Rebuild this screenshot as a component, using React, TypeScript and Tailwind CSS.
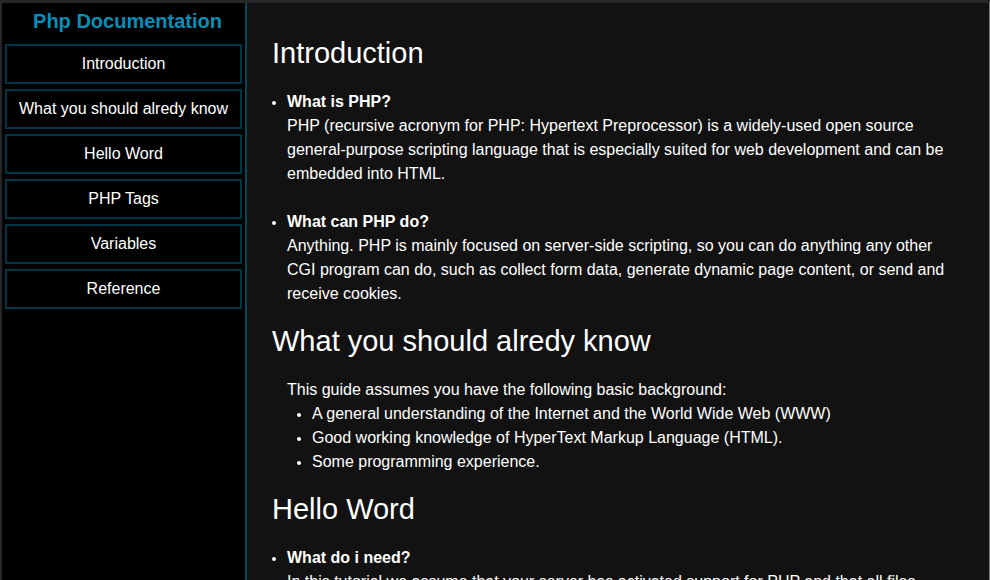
import React from "react";

const links = [
  { id: "introduction", title: "Introduction" },
  { id: "already-know", title: "What you should alredy know" },
  { id: "hello-word", title: "Hello Word" },
  { id: "php-tags", title: "PHP Tags" },
  { id: "variables", title: "Variables" },
  { id: "reference", title: "Reference" },
];

function Section({ id, title, children }: { id: string; title: string; children: React.ReactNode }) {
  return (
    <section id={id} className="pt-[11px]">
      <h2 className="mb-[13px] text-[29px] leading-[48px]">{title}</h2>
      {children}
    </section>
  );
}

function Topic({ title, children }: { title: string; children: React.ReactNode }) {
  return (
    <li>
      <h3 className="font-bold">{title}</h3>
      <p>{children}</p>
    </li>
  );
}

export default function App() {
  return (
    <div className="flex h-screen overflow-hidden border-t-[3px] border-r border-l-2 border-t-[#25262a] border-r-[#77797b] border-l-[#25262a] bg-[#121212] font-['Liberation_Sans',Arial,sans-serif] text-base leading-6 text-white">
      <nav className="w-[245px] shrink-0 border-r-2 border-[#00485c] bg-black px-[3px] text-center">
        <h1 className="pt-1 pb-2 pl-2 text-xl leading-[29px] font-bold text-[#088fb8]">Php Documentation</h1>
        <ul className="flex flex-col gap-[5px]">
          {links.map((link) => (
            <li key={link.id}>
              <a href={`#${link.id}`} className="block border-2 border-[#003646] py-[7px] leading-[22px]">
                {link.title}
              </a>
            </li>
          ))}
        </ul>
      </nav>
      <main className="min-w-0 flex-1 overflow-hidden pt-[15px] pr-10 pl-[25px]">
        <Section id="introduction" title="Introduction">
          <ul className="flex list-disc flex-col gap-6 pl-[15px] marker:text-sm">
            <Topic title="What is PHP?">
              PHP (recursive acronym for PHP: Hypertext Preprocessor) is a widely-used open source general-purpose
              scripting language that is especially suited for web development and can be embedded into HTML.
            </Topic>
            <Topic title="What can PHP do?">
              Anything. PHP is mainly focused on server-side scripting, so you can do anything any other CGI program can
              do, such as collect form data, generate dynamic page content, or send and receive cookies.
            </Topic>
          </ul>
        </Section>
        <Section id="already-know" title="What you should alredy know">
          <div className="pl-[15px]">
            <p>This guide assumes you have the following basic background:</p>
            <ul className="list-disc pl-[25px] marker:text-sm">
              <li>A general understanding of the Internet and the World Wide Web (WWW)</li>
              <li>Good working knowledge of HyperText Markup Language (HTML).</li>
              <li>Some programming experience.</li>
            </ul>
          </div>
        </Section>
        <Section id="hello-word" title="Hello Word">
          <ul className="list-disc pl-[15px] marker:text-sm">
            <Topic title="What do i need?">
              In this tutorial we assume that your server has activated support for PHP and that all files
            </Topic>
          </ul>
        </Section>
      </main>
    </div>
  );
}
